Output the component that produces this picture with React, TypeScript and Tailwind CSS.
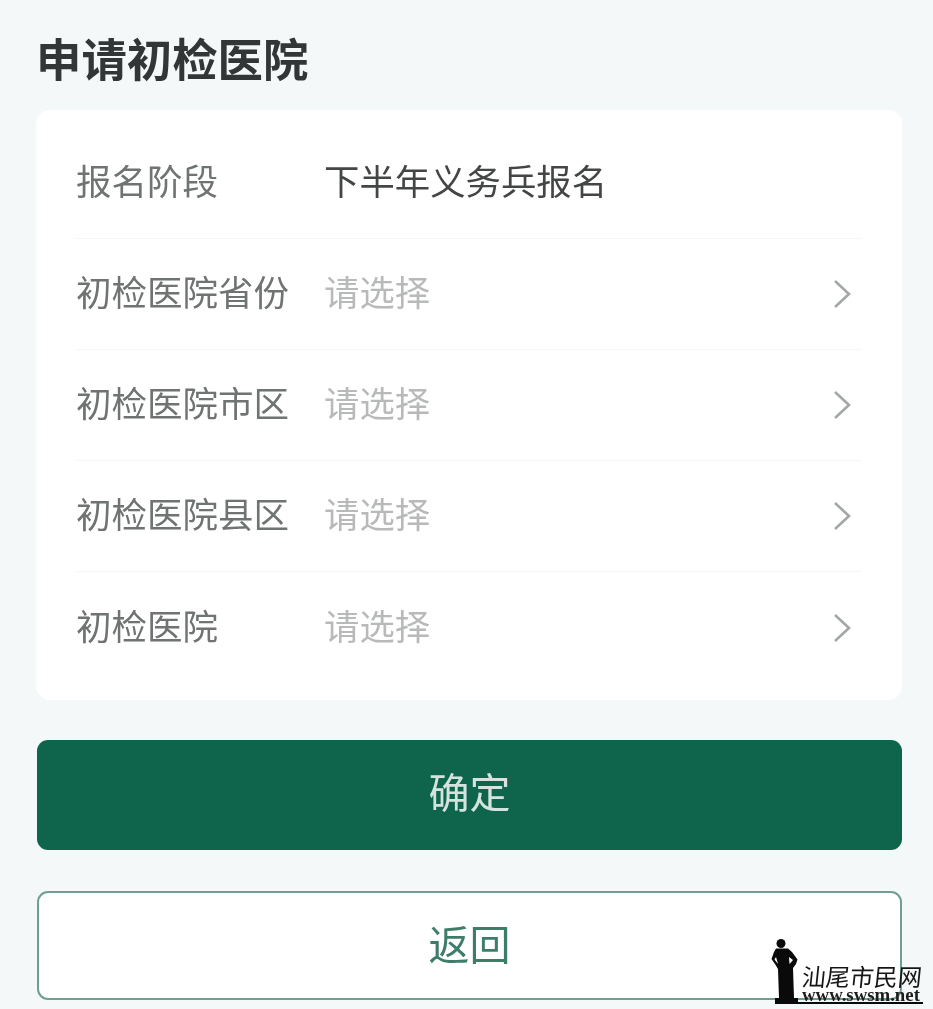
import React from 'react';

const cjk = 'font-["Noto_Sans_CJK_SC","Noto_Sans",sans-serif]';

const rows = [
  { label: '报名阶段', value: '下半年义务兵报名' },
  { label: '初检医院省份' },
  { label: '初检医院市区' },
  { label: '初检医院县区' },
  { label: '初检医院' },
];

const Chevron = () => (
  <svg width="20" height="30" viewBox="0 0 20 30" fill="none" className="shrink-0">
    <path d="M3 2 L17 15 L3 28" stroke="#a3a8a6" strokeWidth="2.6" />
  </svg>
);

const Row = ({ label, value, last }: { label: string; value?: string; last: boolean }) => (
  <div className={`flex h-[111px] items-center pr-[10px] ${last ? '' : 'border-b border-[#f5f6f6]'}`}>
    <div className="w-[248px] shrink-0 pb-[6px] text-[35.5px] leading-none text-[#6f7372]">{label}</div>
    {value ? (
      <div className="flex-1 pb-[6px] text-[35.4px] leading-none text-[#444646]">{value}</div>
    ) : (
      <>
        <div className="flex-1 pb-[6px] text-[35.4px] leading-none text-[#b8baba]">请选择</div>
        <Chevron />
      </>
    )}
  </div>
);

const Watermark = () => (
  <div className="absolute bottom-[5px] right-[10px] h-[68px] w-[152px]">
    <svg width="28" height="65" viewBox="0 0 28 65" className="absolute bottom-0 left-0">
      <circle cx="10" cy="4.5" r="4.5" fill="#0a0a0a" />
      <path
        fillRule="evenodd"
        d="M5 9.5L17 9.5L21 13L26.5 20.5L25 25L22 29L23 59L8 59L7 30L4 25L0.5 20L3 13ZM5 18L3.5 20.5L7 25ZM18 18L22 21L18.5 25Z"
        fill="#0a0a0a"
      />
      <rect x="4" y="59" width="23" height="6" fill="#0a0a0a" />
    </svg>
    <div className="absolute bottom-[3px] left-[31px] w-[121px]">
      <div className={`${cjk} -skew-x-6 text-[24px] leading-[24px] text-[#161616]`}>汕尾市民网</div>
      <div className='font-["Liberation_Serif",serif] text-[18.8px] font-bold leading-[13px] text-[#1c1c1c]'>www.swsm.net</div>
    </div>
    <div className="absolute bottom-0 left-[4px] h-[2.5px] w-[148px] bg-[#0a0a0a]" />
  </div>
);

export default function App() {
  return (
    <div className={`${cjk} relative h-[1009px] w-full overflow-hidden bg-[#f5f8f8] pl-[37px] pr-[31px] pt-[30px] blur-[0.5px]`}>
      <h1 className="-ml-px h-[54px] text-[45.4px] font-bold leading-[54px] text-[#333636]">申请初检医院</h1>
      <div className="-ml-px mt-[26px] rounded-[14px] bg-white pb-[17px] pl-[40px] pr-[40px] pt-[18px]">
        {rows.map((r, i) => (
          <Row key={r.label} label={r.label} value={r.value} last={i === rows.length - 1} />
        ))}
      </div>
      <button className="mt-[40px] flex h-[110px] w-full items-center justify-center rounded-[11px] bg-[#0e654b] pb-[8px] text-[41px] text-[#d5e3de]">
        确定
      </button>
      <button className="mt-[41px] flex h-[109px] w-full items-center justify-center rounded-[11px] border-2 border-[#6f9f90] bg-white pb-[6px] text-[41px] text-[#3f7d6b]">
        返回
      </button>
      <Watermark />
    </div>
  );
}
